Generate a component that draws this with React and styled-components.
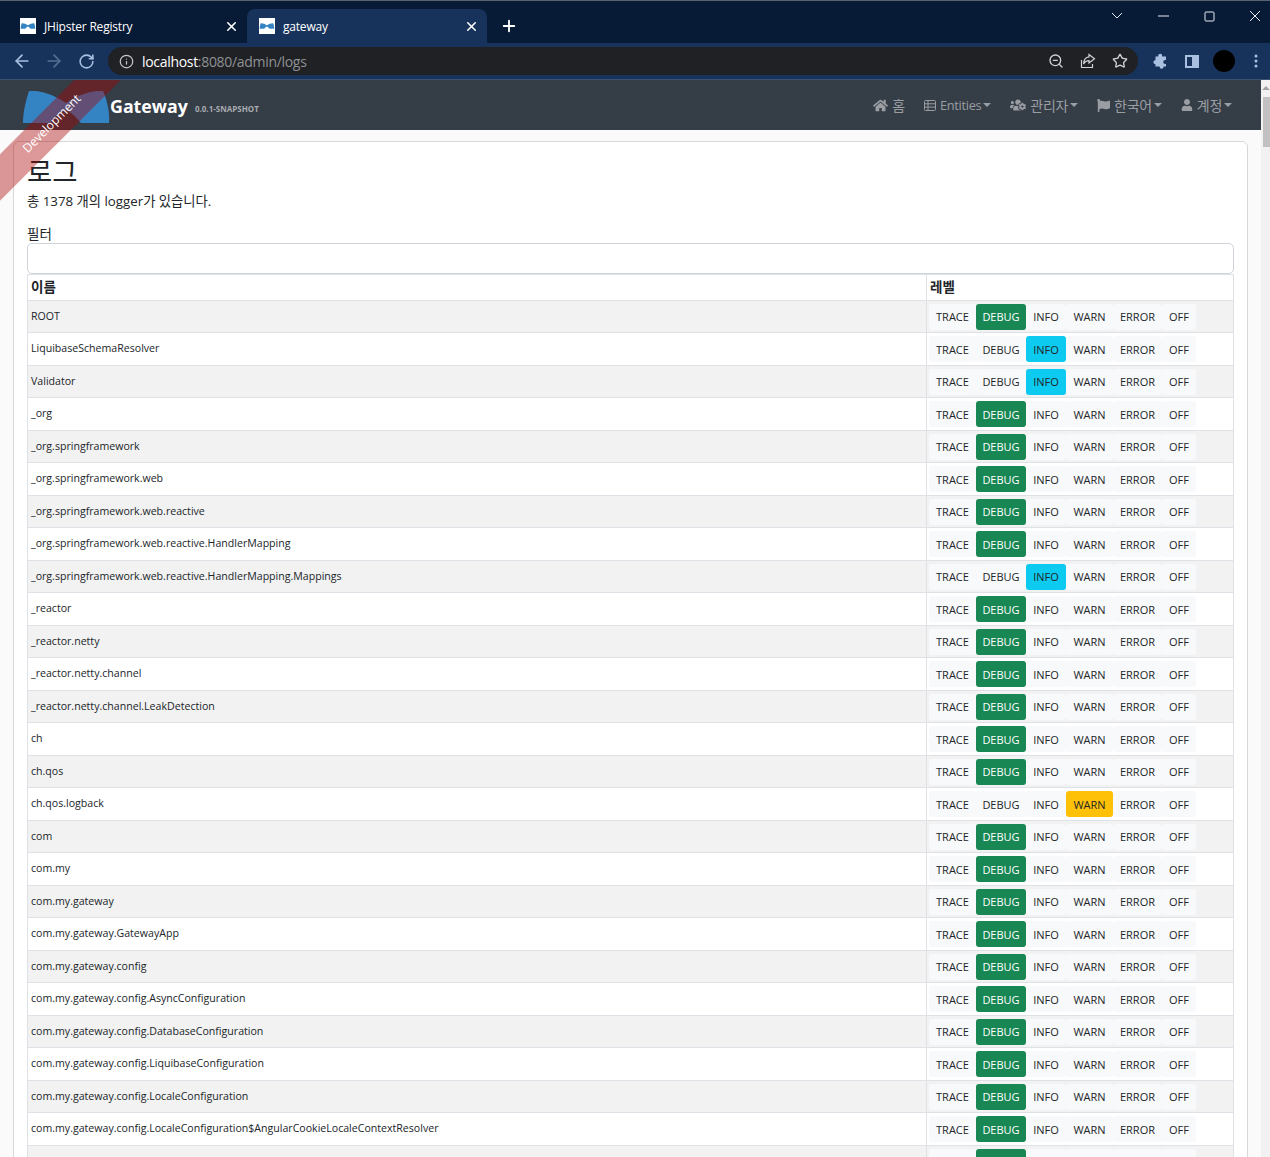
import React from "react";
import styled, { createGlobalStyle } from "styled-components";
import { ArrowLeft, ArrowRight, RotateCw, Info, ZoomOut, Star, X, Plus } from "lucide-react";
import { FaHome, FaUsersCog, FaFlag, FaUser } from "react-icons/fa";

const fontStack = `"Open Sans", "Noto Sans CJK KR", sans-serif`;

const GlobalStyle = createGlobalStyle`
  html, body {
    margin: 0;
    padding: 0;
    height: 1157px;
    overflow: hidden;
    background: #fafafa;
    font-family: ${fontStack};
    color: #212529;
  }
`;

const Shell = styled.div`
  width: 1270px;
  height: 1157px;
  display: flex;
  flex-direction: column;
  overflow: hidden;
`;

const TabStrip = styled.div`
  height: 43px;
  box-sizing: border-box;
  background: #071a36;
  border-top: 1px solid #5a6270;
  padding: 8px 0 0 8px;
  display: flex;
  align-items: stretch;
  overflow: hidden;
`;

const Tab = styled.div`
  width: ${(p) => (p.$active ? "240px" : "239px")};
  box-sizing: border-box;
  padding: 0 8px 0 12px;
  display: flex;
  align-items: center;
  gap: 8px;
  font-size: 12px;
  letter-spacing: -0.2px;
  color: #fff;
  border-radius: 8px 8px 0 0;
  background: ${(p) => (p.$active ? "#17335c" : "transparent")};
`;

const TabTitle = styled.span`
  flex: 1;
`;

const Favicon = styled.svg`
  width: 16px;
  height: 16px;
  background: #fff;
  flex: none;
`;

const NewTab = styled.div`
  margin-left: 13px;
  display: flex;
  align-items: center;
  color: #fff;
`;

const WindowControls = styled.div`
  margin-left: auto;
  margin-top: -8px;
  margin-right: -8px;
  display: flex;
  height: 30px;
`;

const WindowButton = styled.div`
  width: 46px;
  display: flex;
  align-items: center;
  justify-content: center;
  color: #e8ebf0;
`;

const Toolbar = styled.div`
  height: 37px;
  box-sizing: border-box;
  background: #17335c;
  border-bottom: 1px solid #3d5273;
  padding: 4px 0 4px 6px;
  display: flex;
  align-items: flex-start;
`;

const NavButton = styled.div`
  width: 32px;
  height: 28px;
  flex: none;
  display: flex;
  align-items: center;
  justify-content: center;
  color: ${(p) => (p.$dim ? "#56708f" : "#a9c0e0")};
`;

const OmniboxButton = styled(NavButton)`
  color: #d0d2d4;
`;

const AddressBar = styled.div`
  width: 1030px;
  height: 28px;
  margin-left: 6px;
  margin-right: 6px;
  flex: none;
  box-sizing: border-box;
  padding: 0 2px 0 11px;
  border-radius: 14px;
  background: #202124;
  display: flex;
  align-items: center;
  color: #c4c7c9;
  font-size: 14px;
`;

const Url = styled.div`
  margin-left: 8px;
  flex: 1;
  color: #8e9195;
  letter-spacing: -0.31px;
  b {
    font-weight: 400;
    color: #fff;
  }
`;

const Avatar = styled.div`
  width: 22px;
  height: 22px;
  border-radius: 50%;
  background: #000;
`;

const Body = styled.div`
  flex: 1;
  min-height: 0;
  display: flex;
`;

const Page = styled.div`
  flex: 1;
  min-width: 0;
  position: relative;
  overflow: hidden;
  background: #fafafa;
`;

const Scrollbar = styled.div`
  width: 9px;
  flex: none;
  background: #f1f1f1;
`;

const ScrollArrow = styled.div`
  width: 0;
  height: 0;
  margin: 6px 0 7px 1px;
  border-bottom: 4px solid #a3a3a3;
  border-left: 4px solid transparent;
  border-right: 4px solid transparent;
`;

const ScrollThumb = styled.div`
  width: 7px;
  height: 50px;
  margin-left: 2px;
  background: #c1c1c1;
`;

const Ribbon = styled.div`
  position: absolute;
  left: -101px;
  top: 32px;
  width: 300px;
  height: 33px;
  box-sizing: border-box;
  padding-left: 11px;
  line-height: 30px;
  transform: rotate(-45deg);
  background: rgba(170, 0, 0, 0.4);
  color: #fff;
  text-align: center;
  font-size: 12.2px;
  pointer-events: none;
`;

const Navbar = styled.nav`
  height: 50px;
  box-sizing: border-box;
  background: #353d47;
  padding: 0 29px 0 23px;
  display: flex;
  align-items: center;
`;

const Brand = styled.div`
  display: flex;
  align-items: baseline;
  color: #fff;
  margin-top: 4px;
`;

const BrandLogo = styled.svg`
  width: 87px;
  height: 32px;
  align-self: center;
  margin-top: -1px;
`;

const BrandName = styled.span`
  font-size: 17.8px;
  font-weight: 700;
  position: relative;
  top: 2px;
`;

const BrandVersion = styled.span`
  margin-left: 7px;
  font-size: 8px;
  font-weight: 700;
  color: #a7abb0;
  position: relative;
  top: 1px;
`;

const NavList = styled.div`
  margin-left: auto;
  display: flex;
  align-items: center;
  gap: 19px;
`;

const NavItem = styled.div`
  display: flex;
  align-items: center;
  gap: 4px;
  font-size: ${(p) => (p.$latin ? "12.8px" : "14px")};
  letter-spacing: -0.3px;
  color: #9a9ea3;
`;

const Caret = styled.span`
  width: 0;
  height: 0;
  margin-left: -2px;
  border-top: 4px solid currentColor;
  border-left: 4px solid transparent;
  border-right: 4px solid transparent;
`;

const Card = styled.div`
  margin: 11px 13px 0 13px;
  box-sizing: border-box;
  height: 1100px;
  padding: 12px 13px;
  background: #fff;
  border: 1px solid #d8d8d8;
  border-radius: 6px;
`;

const Title = styled.h2`
  margin: 0;
  height: 35px;
  line-height: 35px;
  font-size: 27.5px;
  font-weight: 400;
`;

const Summary = styled.p`
  margin: 2px 0 0;
  line-height: 20px;
  font-size: 13.3px;
`;

const FilterLabel = styled.label`
  display: block;
  margin-top: 15px;
  line-height: 17px;
  font-size: 13.5px;
`;

const FilterInput = styled.input`
  display: block;
  width: 100%;
  height: 31px;
  box-sizing: border-box;
  background: #fff;
  border: 1px solid #ced4da;
  border-radius: 5px;
`;

const Table = styled.table`
  width: 100%;
  table-layout: fixed;
  border-collapse: collapse;
`;

const HeadCell = styled.th`
  height: 23.75px;
  padding: 0 3px 1px;
  box-sizing: content-box;
  text-align: left;
  font-size: 13.5px;
  line-height: 20px;
  font-weight: 700;
  border: 1px solid #dee2e6;
  width: ${(p) => p.$width || "auto"};
`;

const Row = styled.tr`
  height: 32.5px;
  background: ${(p) => (p.$striped ? "#f2f2f2" : "#fff")};
`;

const NameCell = styled.td`
  padding: 8px 3px 0;
  vertical-align: top;
  line-height: 15px;
  border: 1px solid #dee2e6;
  white-space: nowrap;
  font-size: 10.6px;
`;

const LevelCell = styled.td`
  padding: 3px 2px 0;
  vertical-align: top;
  border: 1px solid #dee2e6;
`;

const LevelGroup = styled.div`
  display: flex;
`;

const levelWidths = { TRACE: 47, DEBUG: 50, INFO: 40, WARN: 47, ERROR: 49, OFF: 34 };
const levelColors = {
  DEBUG: "background: #198754; color: #fff;",
  INFO: "background: #0dcaf0; color: #212529;",
  WARN: "background: #ffc107; color: #212529;",
};

const LevelButton = styled.button`
  width: ${(p) => levelWidths[p.$level]}px;
  height: 26px;
  padding: 0;
  border: 0;
  border-radius: 3px;
  font-family: ${fontStack};
  font-size: 11px;
  background: #f8f9fa;
  color: #212529;
  ${(p) => p.$active && levelColors[p.$level]}
`;

const Bowtie = () => (
  <path
    d="M6 0C18 -1 31 4 43 12C55 4 69 -1 80 0C84 9 87 21 86 32H58C53 26 48 21 43 19C38 21 32 26 27 32H0C0 21 3 9 6 0Z"
    fill="#3484c4"
  />
);

const levels = ["TRACE", "DEBUG", "INFO", "WARN", "ERROR", "OFF"];

const loggers = [
  ["ROOT", "DEBUG"],
  ["LiquibaseSchemaResolver", "INFO"],
  ["Validator", "INFO"],
  ["_org", "DEBUG"],
  ["_org.springframework", "DEBUG"],
  ["_org.springframework.web", "DEBUG"],
  ["_org.springframework.web.reactive", "DEBUG"],
  ["_org.springframework.web.reactive.HandlerMapping", "DEBUG"],
  ["_org.springframework.web.reactive.HandlerMapping.Mappings", "INFO"],
  ["_reactor", "DEBUG"],
  ["_reactor.netty", "DEBUG"],
  ["_reactor.netty.channel", "DEBUG"],
  ["_reactor.netty.channel.LeakDetection", "DEBUG"],
  ["ch", "DEBUG"],
  ["ch.qos", "DEBUG"],
  ["ch.qos.logback", "WARN"],
  ["com", "DEBUG"],
  ["com.my", "DEBUG"],
  ["com.my.gateway", "DEBUG"],
  ["com.my.gateway.GatewayApp", "DEBUG"],
  ["com.my.gateway.config", "DEBUG"],
  ["com.my.gateway.config.AsyncConfiguration", "DEBUG"],
  ["com.my.gateway.config.DatabaseConfiguration", "DEBUG"],
  ["com.my.gateway.config.LiquibaseConfiguration", "DEBUG"],
  ["com.my.gateway.config.LocaleConfiguration", "DEBUG"],
  ["com.my.gateway.config.LocaleConfiguration$AngularCookieLocaleContextResolver", "DEBUG"],
  ["com.my.gateway.config.LoggingConfiguration", "DEBUG"],
];

const App = () => (
  <Shell>
    <GlobalStyle />
    <TabStrip>
      <Tab>
        <Favicon viewBox="-4 -6 95 44"><Bowtie /></Favicon>
        <TabTitle>JHipster Registry</TabTitle>
        <X size={15} strokeWidth={2.5} />
      </Tab>
      <Tab $active>
        <Favicon viewBox="-4 -6 95 44"><Bowtie /></Favicon>
        <TabTitle>gateway</TabTitle>
        <X size={15} strokeWidth={2.5} />
      </Tab>
      <NewTab><Plus size={18} strokeWidth={2.5} /></NewTab>
      <WindowControls>
        <WindowButton>
          <svg width="12" height="8" viewBox="0 0 12 8" fill="none" stroke="currentColor"><path d="M1 1l5 5 5-5" /></svg>
        </WindowButton>
        <WindowButton>
          <svg width="11" height="2" viewBox="0 0 11 2" stroke="currentColor"><path d="M0 1h11" /></svg>
        </WindowButton>
        <WindowButton>
          <svg width="11" height="11" viewBox="0 0 11 11" fill="none" stroke="currentColor"><rect x="1" y="1" width="9" height="9" rx="1" /></svg>
        </WindowButton>
        <WindowButton>
          <svg width="12" height="12" viewBox="0 0 12 12" fill="none" stroke="currentColor"><path d="M1 1l10 10M11 1L1 11" /></svg>
        </WindowButton>
      </WindowControls>
    </TabStrip>
    <Toolbar>
      <NavButton><ArrowLeft size={20} strokeWidth={2} /></NavButton>
      <NavButton $dim><ArrowRight size={20} strokeWidth={2} /></NavButton>
      <NavButton><RotateCw size={17} strokeWidth={2.2} /></NavButton>
      <AddressBar>
        <Info size={15} />
        <Url><b>localhost</b>:8080/admin/logs</Url>
        <OmniboxButton><ZoomOut size={16} /></OmniboxButton>
        <OmniboxButton>
          <svg width="16" height="16" viewBox="0 0 16 16" fill="none" stroke="currentColor" strokeWidth="1.2">
            <path d="M1.5 7v7.5h11V11" />
            <path d="M9 1.5l5.5 4.3L9 10V7.6C6.5 7.6 4.8 8.6 3.6 11 3.8 7 6 4.2 9 3.9z" />
          </svg>
        </OmniboxButton>
        <OmniboxButton><Star size={16} strokeWidth={2} /></OmniboxButton>
      </AddressBar>
      <NavButton>
        <svg width="16" height="16" viewBox="0 0 16 16" fill="currentColor">
          <path d="M6.2 3V2.2a2 2 0 0 1 4 0V3H14v3.6h-.8a2 2 0 0 0 0 4h.8V13H11.6v.2a2 2 0 0 1-4 0V13H3.5v-2.2a2 2 0 0 1-1-3.8 2 2 0 0 1 1-.4V3z" transform="translate(0 0.5)" />
        </svg>
      </NavButton>
      <NavButton>
        <svg width="14" height="13" viewBox="0 0 14 13">
          <path d="M0 0h14v13H0z" fill="#a9c0e0" />
          <path d="M2 2h5v9H2z" fill="#17335c" />
        </svg>
      </NavButton>
      <NavButton><Avatar /></NavButton>
      <NavButton>
        <svg width="4" height="14" viewBox="0 0 4 14" fill="currentColor">
          <circle cx="2" cy="2" r="1.5" />
          <circle cx="2" cy="7" r="1.5" />
          <circle cx="2" cy="12" r="1.5" />
        </svg>
      </NavButton>
    </Toolbar>
    <Body>
      <Page>
        <Navbar>
          <Brand>
            <BrandLogo viewBox="0 0 87 32"><Bowtie /></BrandLogo>
            <BrandName>Gateway</BrandName>
            <BrandVersion>0.0.1-SNAPSHOT</BrandVersion>
          </Brand>
          <NavList>
            <NavItem><FaHome size={15} />홈</NavItem>
            <NavItem $latin>
              <svg width="12" height="11" viewBox="0 0 12 11" fill="none" stroke="currentColor">
                <rect x="0.5" y="0.5" width="11" height="10" rx="1" />
                <path d="M0.5 3.8h11M0.5 7.1h11M4 0.5v10" />
              </svg>
              Entities<Caret />
            </NavItem>
            <NavItem><FaUsersCog size={16} />관리자<Caret /></NavItem>
            <NavItem><FaFlag size={13} />한국어<Caret /></NavItem>
            <NavItem><FaUser size={12} />계정<Caret /></NavItem>
          </NavList>
        </Navbar>
        <Card>
          <Title>로그</Title>
          <Summary>총 1378 개의 logger가 있습니다.</Summary>
          <FilterLabel htmlFor="filter">필터</FilterLabel>
          <FilterInput id="filter" type="text" />
          <Table>
            <thead>
              <tr>
                <HeadCell>이름</HeadCell>
                <HeadCell $width="300px">레벨</HeadCell>
              </tr>
            </thead>
            <tbody>
              {loggers.map(([name, current], i) => (
                <Row key={name} $striped={i % 2 === 0}>
                  <NameCell>{name}</NameCell>
                  <LevelCell>
                    <LevelGroup>
                      {levels.map((level) => (
                        <LevelButton key={level} $level={level} $active={level === current}>
                          {level}
                        </LevelButton>
                      ))}
                    </LevelGroup>
                  </LevelCell>
                </Row>
              ))}
            </tbody>
          </Table>
        </Card>
        <Ribbon>Development</Ribbon>
      </Page>
      <Scrollbar>
        <ScrollArrow />
        <ScrollThumb />
      </Scrollbar>
    </Body>
  </Shell>
);

export default App;
